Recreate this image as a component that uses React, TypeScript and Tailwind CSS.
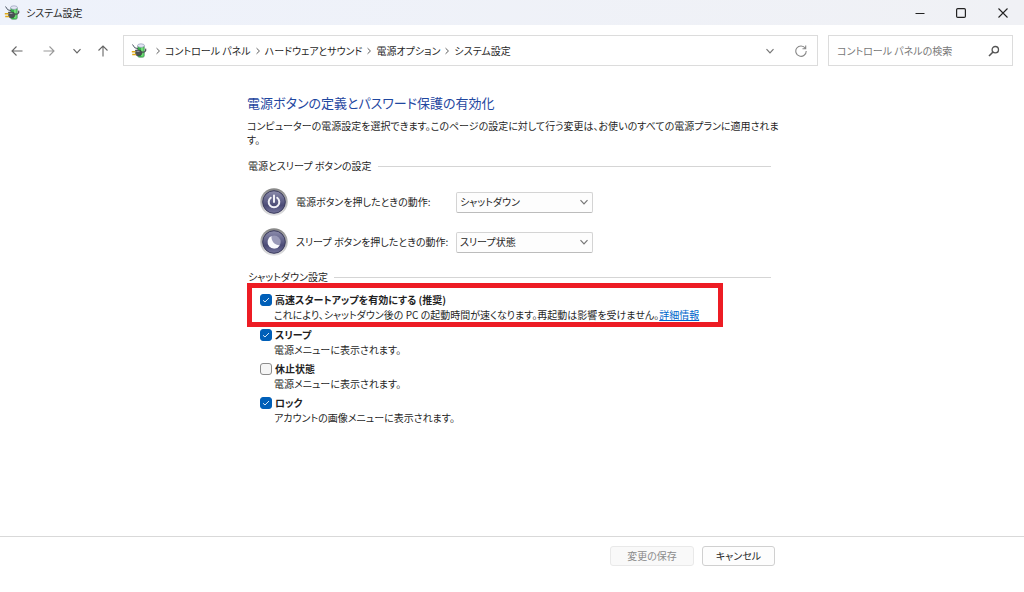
import React, { useState } from 'react';

type Option = {
  id: string;
  title: string;
  description: string;
  checked: boolean;
  highlighted?: boolean;
};

const BREADCRUMBS = ['コントロール パネル', 'ハードウェアとサウンド', '電源オプション', 'システム設定'];

const OPTIONS: Option[] = [
  {
    id: 'fast-startup',
    title: '高速スタートアップを有効にする (推奨)',
    description: 'これにより、シャットダウン後の PC の起動時間が速くなります。再起動は影響を受けません。',
    checked: true,
    highlighted: true,
  },
  { id: 'sleep-menu', title: 'スリープ', description: '電源メニューに表示されます。', checked: true },
  { id: 'hibernate-menu', title: '休止状態', description: '電源メニューに表示されます。', checked: false },
  { id: 'lock-menu', title: 'ロック', description: 'アカウントの画像メニューに表示されます。', checked: true },
];

const ACTIONS = ['何もしない', 'スリープ状態', '休止状態', 'シャットダウン'];

const PowerPlugIcon: React.FC = () => (
  <svg width="16" height="16" viewBox="0 0 16 16" className="shrink-0" aria-hidden="true">
    <rect x="6.5" y="1.8" width="7" height="12.7" rx="2.2" fill="#35b548" stroke="#8fa899" strokeWidth=".6" />
    <rect x="10" y="4" width="2.5" height="9.5" rx="1" fill="#74dc78" />
    <ellipse cx="10" cy="2.6" rx="3.4" ry="1.8" fill="#e3e6f4" stroke="#8991b0" strokeWidth=".6" />
    <path d="M1.5 1.5 3.8 4.8l3.400.900" fill="none" stroke="#4b5563" strokeWidth="1" />
    <path d="M11 9c3 .5 4.300-1 3.600-3.300" fill="none" stroke="#4a5055" strokeWidth="1.200" />
    <path d="M4.500 7h3c2.300 0 3.500 1.200 3.500 2.800s-1.200 3-3.500 3H6L4.500 11.500z" fill="#4b5155" stroke="#303437" strokeWidth=".5" />
    <path d="M5.500 8.300h3" stroke="#a5abb0" strokeWidth="1" />
    <path d="M.8 8.700h3.700M1.200 11.500h4" stroke="#dfa916" strokeWidth="1.500" />
  </svg>
);

const Chevron: React.FC<{ className?: string }> = ({ className }) => (
  <svg width="10" height="10" viewBox="0 0 10 10" className={className} aria-hidden="true">
    <path d="M1.500 3.200 5 6.800l3.500-3.600" fill="none" stroke="currentColor" strokeWidth="1.200" />
  </svg>
);

const Arrow: React.FC<{ className?: string }> = ({ className }) => (
  <svg width="12" height="12" viewBox="0 0 12 12" className={className} aria-hidden="true">
    <path d="M11.500 6H1M5.500 1.500 1 6l4.500 4.500" fill="none" stroke="currentColor" strokeWidth="1.100" />
  </svg>
);

const RoundIcon: React.FC<{ kind: 'power' | 'sleep' }> = ({ kind }) => (
  <svg width="28" height="28" viewBox="0 0 28 28" aria-hidden="true">
    <defs>
      <linearGradient id={`rim-${kind}`} x1="0" y1="0" x2="0" y2="1">
        <stop offset="0" stopColor="#858585" />
        <stop offset="1" stopColor="#e2e2e4" />
      </linearGradient>
      <linearGradient id={`face-${kind}`} x1="0" y1="0" x2="0" y2="1">
        <stop offset="0" stopColor="#8c8cab" />
        <stop offset=".5" stopColor="#5c5c85" />
        <stop offset=".65" stopColor="#4b4b76" />
        <stop offset="1" stopColor="#75759c" />
      </linearGradient>
    </defs>
    <circle cx="14" cy="14" r="13.700" fill={`url(#rim-${kind})`} />
    <circle cx="14" cy="14" r="11.300" fill={`url(#face-${kind})`} stroke="#3a3a5c" strokeWidth="1" />
    {kind === 'power' ? (
      <path
        d="M10.800 9.800a5.300 5.300 0 1 0 6.400 0M14 7.500v6.500"
        fill="none"
        stroke="#f2f2f8"
        strokeWidth="2"
        strokeLinecap="round"
      />
    ) : (
      <>
        <circle cx="14.200" cy="14" r="6.500" fill="#9a9ab8" />
        <path d="M11.500 8.100a6.500 6.500 0 1 0 8.300 9.100C15.500 17.500 11 14 11.500 8.100z" fill="#fafafd" />
      </>
    )}
  </svg>
);

const SectionHeader: React.FC<{ title: string }> = ({ title }) => (
  <div className="flex items-center gap-1.5 pl-px">
    <h2 className="whitespace-nowrap leading-3">{title}</h2>
    <div className="h-px flex-1 bg-[#d5d5d5]" />
  </div>
);

const ActionRow: React.FC<{ kind: 'power' | 'sleep'; label: string; initial: string }> = ({ kind, label, initial }) => {
  const [value, setValue] = useState(initial);

  return (
    <div className="flex items-center">
      <RoundIcon kind={kind} />
      <label htmlFor={kind} className="ml-2 w-40 whitespace-nowrap">
        {label}
      </label>
      <div className="grid w-[137px] items-center">
        <select
          id={kind}
          value={value}
          onChange={e => setValue(e.target.value)}
          className="col-start-1 row-start-1 h-[21px] w-full appearance-none rounded-xs border border-[#d4d4d4] border-b-[#bcbcbc] bg-[#fdfdfd] px-[3px]"
        >
          {ACTIONS.map(action => (
            <option key={action}>{action}</option>
          ))}
        </select>
        <Chevron className="pointer-events-none col-start-1 row-start-1 mr-1 justify-self-end text-[#777]" />
      </div>
    </div>
  );
};

const OptionRow: React.FC<{ option: Option }> = ({ option }) => {
  const [checked, setChecked] = useState(option.checked);

  return (
    <li className={option.highlighted ? 'w-[476px] border-[5px] border-[#ed1c24] pt-1 pl-2' : 'mb-1 pl-[13px]'}>
      <div className="flex h-[15px] items-center gap-[3px]">
        <span className="grid size-3 shrink-0 place-items-center">
          <input
            type="checkbox"
            id={option.id}
            checked={checked}
            onChange={() => setChecked(!checked)}
            className="col-start-1 row-start-1 size-3 appearance-none rounded-[3px] border border-[#8c8c8c] bg-[#f5f5f5] checked:border-[#005fb8] checked:bg-[#005fb8]"
          />
          {checked && (
            <svg width="8" height="8" viewBox="0 0 8 8" className="pointer-events-none col-start-1 row-start-1">
              <path d="M1 4.200 3 6l4-4" fill="none" stroke="#d5e7f7" strokeWidth="1" />
            </svg>
          )}
        </span>
        <label htmlFor={option.id} className="whitespace-nowrap font-bold">
          {option.title}
        </label>
      </div>
      <p className="h-[15px] whitespace-nowrap pl-[14px] leading-[15px]">
        {option.description}
        {option.highlighted && (
          <a href="#details" className="text-[#0066cc] underline">
            詳細情報
          </a>
        )}
      </p>
    </li>
  );
};

const App: React.FC = () => {
  const [search, setSearch] = useState('');

  return (
    <div className="flex min-h-screen flex-col bg-white font-['Noto_Sans_CJK_JP',sans-serif] text-[10px] leading-4 text-[#1f1f1f] [font-feature-settings:'palt']">
      <header className="flex h-[25px] items-center bg-linear-to-r from-[#eef2fb] to-[#f0f1f5] pl-1">
        <PowerPlugIcon />
        <h1 className="ml-1.5 flex-1">システム設定</h1>
        <div className="flex text-[#222]">
          <button aria-label="最小化" className="grid h-[25px] w-[41px] place-items-center">
            <svg width="10" height="10" viewBox="0 0 10 10">
              <path d="M.5 5.500h9" stroke="currentColor" />
            </svg>
          </button>
          <button aria-label="最大化" className="grid h-[25px] w-[41px] place-items-center">
            <svg width="10" height="10" viewBox="0 0 10 10">
              <rect x=".6" y=".6" width="8.800" height="8.800" rx="1.200" fill="none" stroke="currentColor" strokeWidth="1.200" />
            </svg>
          </button>
          <button aria-label="閉じる" className="grid h-[25px] w-[43px] place-items-center">
            <svg width="10" height="10" viewBox="0 0 10 10">
              <path d="m.5.500 9 9m0-9-9 9" stroke="currentColor" strokeWidth="1.100" />
            </svg>
          </button>
        </div>
      </header>

      <div className="flex items-center pt-2.5 pr-[11px] pl-[11px]">
        <nav className="flex w-28 shrink-0 items-center text-[#666]">
          <button aria-label="戻る">
            <Arrow />
          </button>
          <button aria-label="進む" className="ml-5 text-[#999]">
            <Arrow className="rotate-180" />
          </button>
          <button aria-label="最近表示した場所" className="ml-[17px]">
            <Chevron />
          </button>
          <button aria-label="上へ" className="ml-[15px]">
            <Arrow className="rotate-90" />
          </button>
        </nav>

        <div className="flex h-[31px] flex-1 items-center border border-[#dcdcdc] pl-[7px]">
          <PowerPlugIcon />
          <ol className="ml-1 flex flex-1 items-center">
            {BREADCRUMBS.map(name => (
              <li key={name} className="flex items-center whitespace-nowrap">
                <Chevron className="mx-[3px] size-2 -rotate-90 text-[#555]" />
                <a href="#path">{name}</a>
              </li>
            ))}
          </ol>
          <button aria-label="履歴" className="mr-5 text-[#777]">
            <Chevron />
          </button>
          <button aria-label="最新の情報に更新" className="mr-2.5 text-[#888]">
            <svg width="12" height="12" viewBox="0 0 12 12">
              <path d="M10.300 3.200A5.200 5.200 0 1 0 11.200 6M10.700.500v3.200H7.500" fill="none" stroke="currentColor" strokeWidth="1.100" />
            </svg>
          </button>
        </div>

        <div className="ml-2.5 flex h-[31px] w-[185px] items-center border border-[#dcdcdc] pr-3 pl-2">
          <input
            type="text"
            aria-label="コントロール パネルの検索"
            placeholder="コントロール パネルの検索"
            value={search}
            onChange={e => setSearch(e.target.value)}
            className="min-w-0 flex-1 outline-none placeholder:text-[#777]"
          />
          <svg width="12" height="12" viewBox="0 0 12 12" className="text-[#555]" aria-hidden="true">
            <circle cx="7.300" cy="4.700" r="3.200" fill="none" stroke="currentColor" strokeWidth="1.300" />
            <path d="M5 7 1 11" stroke="currentColor" strokeWidth="1.600" />
          </svg>
        </div>
      </div>

      <main className="flex-1 pt-[27px] pr-6 pl-[247px]">
        <div className="max-w-[524px]">
          <h2 className="text-[13px] leading-5 whitespace-nowrap text-[#1f479f]">
            電源ボタンの定義とパスワード保護の有効化
          </h2>
          <p className="-mr-2 mt-1.5 mb-[13px] leading-[14px]">
            コンピューターの電源設定を選択できます。このページの設定に対して行う変更は、お使いのすべての電源プランに適用されます。
          </p>

          <SectionHeader title="電源とスリープ ボタンの設定" />
          <div className="mt-4 mb-[15px] flex flex-col gap-3 pl-[13px]">
            <ActionRow kind="power" label="電源ボタンを押したときの動作:" initial="シャットダウン" />
            <ActionRow kind="sleep" label="スリープ ボタンを押したときの動作:" initial="スリープ状態" />
          </div>

          <SectionHeader title="シャットダウン設定" />
          <ul>
            {OPTIONS.map(option => (
              <OptionRow key={option.id} option={option} />
            ))}
          </ul>
        </div>
      </main>

      <footer className="flex h-14 items-start border-t border-[#d9d9d9] pt-[9px] pr-6 pl-[247px]">
        <div className="flex max-w-[528px] flex-1 justify-end gap-2">
          <button disabled className="h-5 w-[84px] rounded-[3px] border border-[#e9e9e9] bg-[#f9f9f9] text-[#8c8c8c]">
            変更の保存
          </button>
          <button className="h-5 w-[73px] rounded-[3px] border border-[#d0d0d0] bg-[#fdfdfd]">キャンセル</button>
        </div>
      </footer>
    </div>
  );
};

export default App;
